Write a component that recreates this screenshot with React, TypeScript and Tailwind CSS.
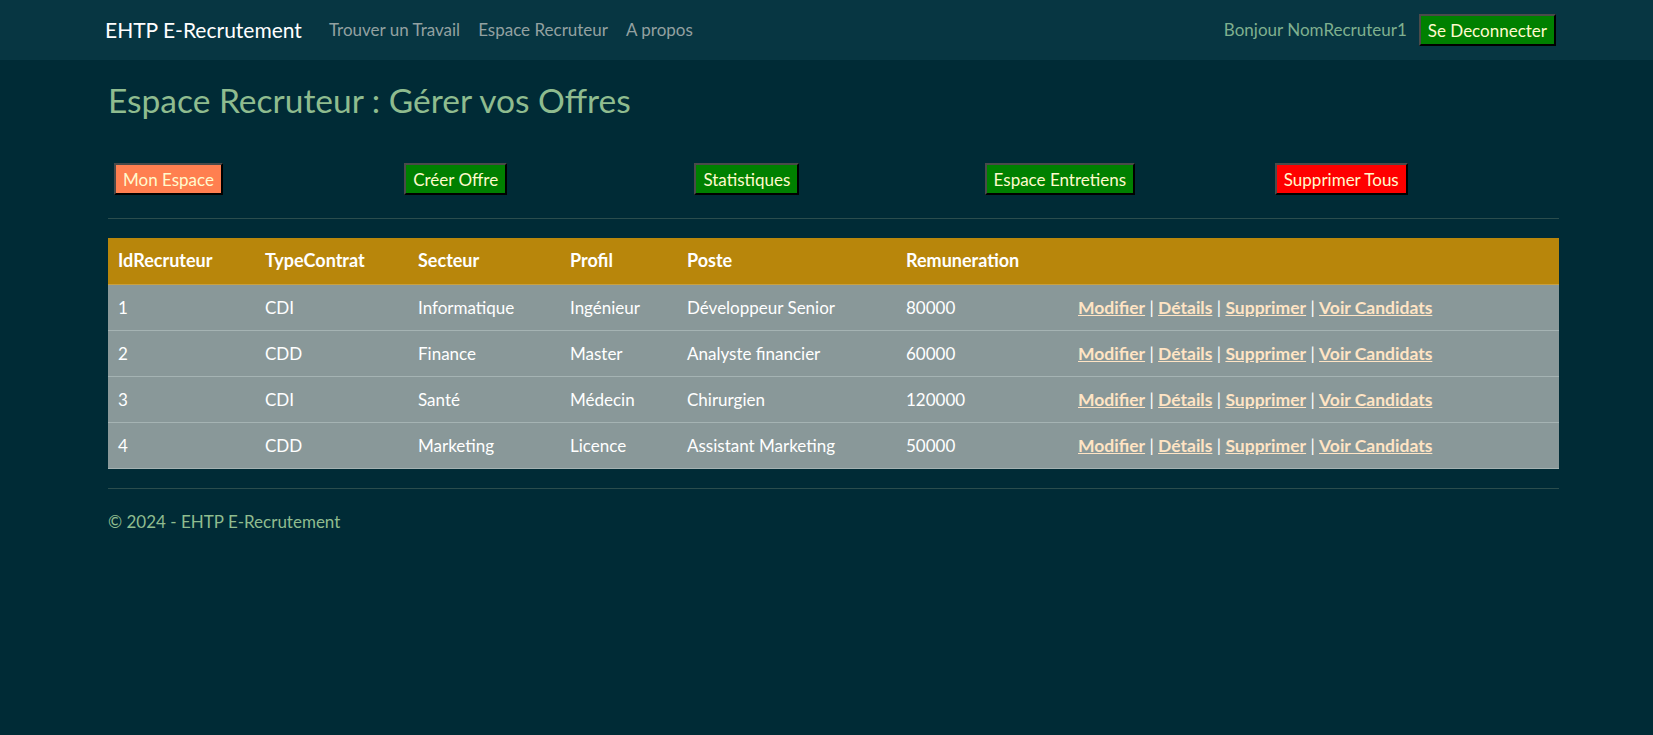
import React from "react";

const rows = [
  ["1", "CDI", "Informatique", "Ingénieur", "Développeur Senior", "80000"],
  ["2", "CDD", "Finance", "Master", "Analyste financier", "60000"],
  ["3", "CDI", "Santé", "Médecin", "Chirurgien", "120000"],
  ["4", "CDD", "Marketing", "Licence", "Assistant Marketing", "50000"],
];

const btnBase =
  "px-[7px] h-[32px] text-[17px] text-[#fffacd] border-2 border-t-[#4a4a4a] border-l-[#4a4a4a] border-b-black border-r-black leading-none";

const linkCls = "font-bold underline text-[#ffe4c4] text-[17.5px]";

export default function App() {
  return (
    <div
      className="min-h-[735px] bg-[#002b36]"
      style={{ fontFamily: "Lato, 'Liberation Sans', sans-serif" }}
    >
      <nav className="h-[60px] bg-[#073642] flex items-center pl-[105px] pr-[97px]">
        <span className="text-[21px] text-white mr-[18px]">EHTP E-Recrutement</span>
        <a className="text-[17px] text-[#93a1a1] px-[9px]">Trouver un Travail</a>
        <a className="text-[17px] text-[#93a1a1] px-[9px]">Espace Recruteur</a>
        <a className="text-[17px] text-[#93a1a1] px-[9px]">A propos</a>
        <div className="ml-auto flex items-center gap-[12px]">
          <span className="text-[17px] text-[#7fb08f]">Bonjour NomRecruteur1</span>
          <button className={`${btnBase} bg-[#008000]`}>Se Deconnecter</button>
        </div>
      </nav>

      <main className="pl-[108px] pr-[94px]">
        <h1 className="text-[33.5px] text-[#8fbc8f] pt-[16px] leading-[48px]">
          Espace Recruteur : Gérer vos Offres
        </h1>

        <div className="grid grid-cols-5 mt-[39px]">
          <div className="pl-[6px]">
            <button className={`${btnBase} bg-[#ff7f50]`}>Mon Espace</button>
          </div>
          <div className="pl-[6px]">
            <button className={`${btnBase} bg-[#008000]`}>Créer Offre</button>
          </div>
          <div className="pl-[6px]">
            <button className={`${btnBase} bg-[#008000]`}>Statistiques</button>
          </div>
          <div className="pl-[6px]">
            <button className={`${btnBase} bg-[#008000]`}>Espace Entretiens</button>
          </div>
          <div className="pl-[6px]">
            <button className={`${btnBase} bg-[#ff0000]`}>Supprimer Tous</button>
          </div>
        </div>

        <hr className="mt-[23px] border-0 border-t border-[#2b4d4d]" />

        <table className="mt-[19px] w-full table-fixed text-[17px] border-collapse">
          <colgroup>
            <col className="w-[147px]" />
            <col className="w-[153px]" />
            <col className="w-[152px]" />
            <col className="w-[117px]" />
            <col className="w-[219px]" />
            <col className="w-[172px]" />
            <col />
          </colgroup>
          <thead>
            <tr className="bg-[#b8860b] h-[46px] border-b border-[#c9a040]">
              {["IdRecruteur", "TypeContrat", "Secteur", "Profil", "Poste", "Remuneration", ""].map(
                (h, i) => (
                  <th key={i} className="text-left font-bold text-white text-[18px] px-[10px]">
                    {h}
                  </th>
                )
              )}
            </tr>
          </thead>
          <tbody>
            {rows.map((r, i) => (
              <tr key={i} className="bg-[#899899] h-[46px] border-b border-[#a5b3b3]">
                {r.map((c, j) => (
                  <td key={j} className="px-[10px] pt-[2px] text-white">
                    {c}
                  </td>
                ))}
                <td className="px-[10px] pt-[2px] text-white whitespace-nowrap">
                  <a className={linkCls}>Modifier</a> |{" "}
                  <a className={linkCls}>Détails</a> |{" "}
                  <a className={linkCls}>Supprimer</a> |{" "}
                  <a className={linkCls}>Voir Candidats</a>
                </td>
              </tr>
            ))}
          </tbody>
        </table>

        <hr className="mt-[19px] border-0 border-t border-[#2b4d4d]" />

        <footer className="pt-[20px] text-[17px] text-[#8fbc8f]">© 2024 - EHTP E-Recrutement</footer>
      </main>
    </div>
  );
}
